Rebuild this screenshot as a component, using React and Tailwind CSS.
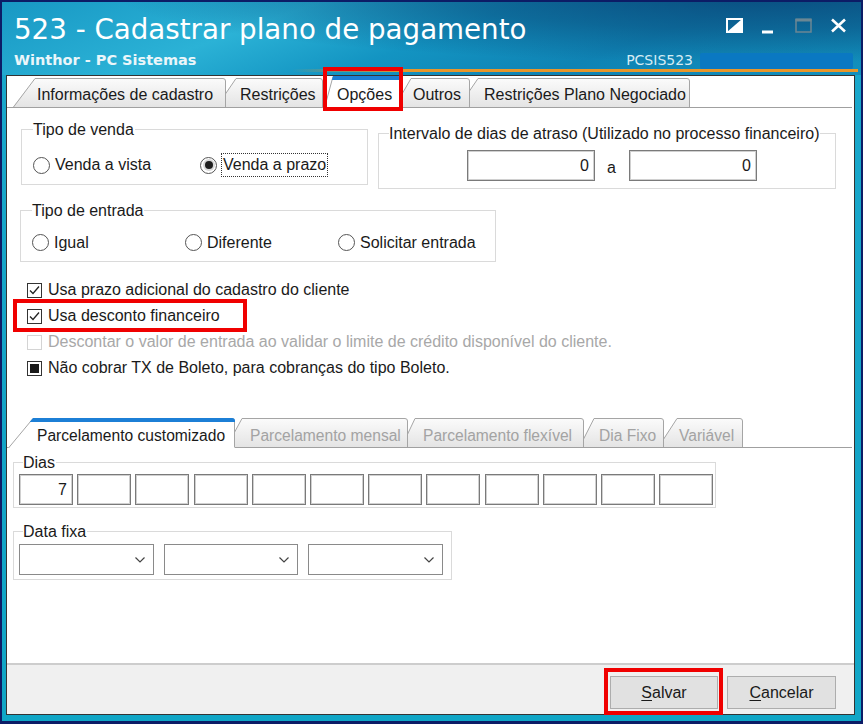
import React from "react";

const Tab = ({ id, label, w, h, s, cls, selected, dim, small }) => {
  const fill = `M0 ${h} L${s} 0.5 L${w - 3} 0.5 Q${w - 0.5} 0.5 ${w - 0.5} 3 L${w - 0.5} ${h} Z`;
  const stroke = `M0.5 ${h} L${s} 0.5 L${w - 3} 0.5 Q${w - 0.5} 0.5 ${w - 0.5} 3 L${w - 0.5} ${selected ? h - 1 : h}`;
  const bar = `M${s} 0 L${w - 3} 0 Q${w} 0 ${w} 3 L${w} 4 L${s - (4 * s) / h} 4 Z`;
  return (
    <div className={`relative shrink-0 flex items-end ${cls}`}>
      <svg className="absolute left-0 top-0" width={w} height={h}>
        <defs>
          <linearGradient id={id} x1="0" y1="0" x2="0" y2="1">
            <stop offset="0" stopColor="#fbfbfb" />
            <stop offset="1" stopColor="#e4e4e4" />
          </linearGradient>
        </defs>
        <path d={fill} fill={selected ? "#ffffff" : `url(#${id})`} />
        <path d={stroke} fill="none" stroke="#a5a5a5" strokeWidth="1" />
        {selected && <path d={bar} fill="#1c7fd6" />}
      </svg>
      <span
        className={`relative whitespace-nowrap ${small ? "text-[15.6px]" : ""} ${dim ? "text-[#a3a3a3]" : "text-[#1a1a1a]"}`}
      >
        {label}
      </span>
    </div>
  );
};

const Group = ({ label, labelCls, cls, children }) => (
  <div className={`relative shrink-0 border border-[#dadada] ${cls}`}>
    <span className={`absolute -top-[9px] ${labelCls} bg-white whitespace-nowrap pr-[1px]`}>{label}</span>
    {children}
  </div>
);

const Radio = ({ checked, label, cls, focus }) => (
  <div className={`flex items-center shrink-0 ${cls}`}>
    <span className="w-[17px] h-[17px] rounded-full border border-[#555] bg-white flex items-center justify-center shrink-0">
      {checked && <span className="w-[8px] h-[8px] rounded-full bg-[#1e1e1e] shadow-[0_0_0_2px_#d8d8d8]" />}
    </span>
    {focus ? (
      <span className="ml-[4px] h-[24px] flex items-center border border-dotted border-[#333] px-[1px] whitespace-nowrap">{label}</span>
    ) : (
      <span className="ml-[5px] whitespace-nowrap">{label}</span>
    )}
  </div>
);

const Check = ({ state, label, disabled }) => (
  <div className="flex items-center h-[26px]">
    <span
      className={`w-[15px] h-[15px] border ${disabled ? "border-[#d4d4d4]" : "border-[#333]"} bg-white flex items-center justify-center shrink-0`}
    >
      {state === "checked" && (
        <svg width="13" height="13" viewBox="0 0 13 13">
          <path d="M2 6.5 L5 9.5 L11 2.5" fill="none" stroke="#222" strokeWidth="1.3" />
        </svg>
      )}
      {state === "ind" && <span className="w-[9px] h-[9px] bg-[#1a1a1a]" />}
    </span>
    <span className={`ml-[6px] whitespace-nowrap ${disabled ? "text-[#a8a8a8]" : ""}`}>{label}</span>
  </div>
);

const Input = ({ cls, value }) => (
  <div
    className={`shrink-0 h-[31px] border border-[#7a7a7a] bg-white shadow-[inset_0_0_0_1px_#d0d0d0] flex items-center justify-end pr-[5px] ${cls}`}
  >
    {value}
  </div>
);

const Select = ({ cls }) => (
  <div className={`shrink-0 h-[31px] border border-[#8a8a8a] bg-white flex items-center justify-end pr-[8px] ${cls}`}>
    <svg width="10" height="6" viewBox="0 0 10 6">
      <path d="M0.5 0.5 L5 5 L9.5 0.5" fill="none" stroke="#444" strokeWidth="1.2" />
    </svg>
  </div>
);

export default function App() {
  const dias = ["7", "", "", "", "", "", "", "", "", "", "", ""];
  return (
    <div className="relative w-[863px] h-[724px] bg-[#0c1c66] pt-[2px] px-[2px] pb-[3px] font-['Liberation_Sans',Arial,sans-serif] text-[16px] leading-[18px] text-[#1a1a1a]">
      <div className="w-full h-full flex flex-col bg-[linear-gradient(180deg,#1ba8cc_0%,#13a3c6_60%,#10a6c6_100%)]">
        {/* Title area */}
        <div className="h-[73px] shrink-0 flex flex-col pt-[12px] bg-[radial-gradient(ellipse_at_88%_-10%,#0a4e80_0%,rgba(10,80,128,0.6)_30%,transparent_60%),linear-gradient(160deg,#1898c4_0%,#2bb2d6_30%,#1394c2_50%,#0f83b4_70%,#1290bd_100%)]">
          <div className="flex items-start h-[32px]">
            <div className="pl-[12px] font-['DejaVu_Sans',sans-serif] text-[27.7px] leading-[32px] text-white whitespace-nowrap">
              523 - Cadastrar plano de pagamento
            </div>
            <div className="ml-auto mr-[14px] mt-[4px] flex items-start">
              <svg width="17" height="15" viewBox="0 0 17 15">
                <rect x="1" y="1" width="15" height="13" fill="none" stroke="#ffffff" strokeWidth="2" />
                <polygon points="16,1 16,14 1,14" fill="#ffffff" />
              </svg>
              <svg className="ml-[19px]" width="11" height="16" viewBox="0 0 11 16">
                <rect x="0" y="12.5" width="11" height="3" fill="#ffffff" />
              </svg>
              <svg className="ml-[22px]" width="17" height="15" viewBox="0 0 17 15">
                <rect x="1" y="1.5" width="15" height="12.5" fill="none" stroke="#6b8794" strokeWidth="1.5" />
                <rect x="0.5" y="0.5" width="16" height="3" fill="#6b8794" />
              </svg>
              <svg className="ml-[18px]" width="17" height="15" viewBox="0 0 17 15">
                <path d="M2 1.5 L15 13.5 M15 1.5 L2 13.5" stroke="#ffffff" strokeWidth="2.6" />
              </svg>
            </div>
          </div>
          <div className="mt-[6px] h-[17px] flex items-end">
            <div className="pl-[12px] self-start font-['DejaVu_Sans',sans-serif] font-bold text-[14.5px] leading-[17px] text-[#eaf6fa] whitespace-nowrap">
              Winthor - PC Sistemas
            </div>
            <div className="ml-auto self-start font-['DejaVu_Sans',sans-serif] text-[14px] leading-[17px] text-[#d6ecf4] whitespace-nowrap">
              PCSIS523
            </div>
            <div className="ml-[7px] mr-[8px] w-[153px] h-[16px] rounded-[2px] bg-[#0a78c2]" />
          </div>
          <div className="ml-[290px] mr-[3px] h-[3px] bg-[linear-gradient(90deg,rgba(232,150,40,0)_0%,#e8962a_20%,#e8962a_100%)]" />
        </div>

        {/* Main panel */}
        <div className="ml-[4px] mr-[6px] mb-[6px] flex-1 border border-[#333] bg-white flex flex-col">
          {/* top tabs */}
          <div className="flex items-end h-[32px] shrink-0 border-b border-[#a0a0a0] mr-[2px]">
            <Tab id="t1" label="Informações de cadastro" w={213} h={29} s={22} cls="w-[213px] h-[29px] ml-[6px] z-[5] pl-[24px] pb-[3px]" />
            <Tab id="t2" label="Restrições" w={107} h={29} s={20} cls="w-[107px] h-[29px] -ml-[10px] z-[4] pl-[24px] pb-[3px]" />
            <Tab id="t3" label="Opções" w={77} h={32} s={9} selected cls="w-[77px] h-[32px] ml-[1px] -mb-[1px] z-[10] pl-[13px] pb-[4px]" />
            <Tab id="t4" label="Outros" w={76} h={29} s={17} cls="w-[76px] h-[29px] -ml-[7px] z-[3] pl-[19px] pb-[3px]" />
            <Tab id="t5" label="Restrições Plano Negociado" w={232} h={29} s={20} cls="w-[232px] h-[29px] -ml-[12px] z-[2] pl-[26px] pb-[3px]" />
          </div>

          {/* tab page */}
          <div className="flex-1 flex flex-col pt-[21px]">
            <div className="flex items-start">
              <Group label="Tipo de venda" labelCls="left-[11px]" cls="ml-[14px] w-[347px] h-[56px]">
                <div className="flex items-center h-[24px] mt-[23px] pl-[11px]">
                  <Radio label="Venda a vista" cls="w-[167px]" />
                  <Radio label="Venda a prazo" checked focus />
                </div>
              </Group>
              <Group
                label="Intervalo de dias de atraso (Utilizado no processo financeiro)"
                labelCls="left-[10px]"
                cls="ml-[10px] mt-[4px] w-[458px] h-[56px]"
              >
                <div className="flex items-start mt-[16px] pl-[88px]">
                  <Input cls="w-[128px]" value="0" />
                  <span className="ml-[12px] mt-[9px]">a</span>
                  <Input cls="ml-[13px] w-[128px]" value="0" />
                </div>
              </Group>
            </div>

            <Group label="Tipo de entrada" labelCls="left-[11px]" cls="mt-[21px] ml-[13px] w-[476px] h-[52px]">
              <div className="flex items-center h-[17px] mt-[23px] pl-[11px]">
                <Radio label="Igual" cls="w-[153px]" />
                <Radio label="Diferente" cls="w-[153px]" />
                <Radio label="Solicitar entrada" />
              </div>
            </Group>

            <div className="mt-[15px] pl-[20px] flex flex-col">
              <Check state="checked" label="Usa prazo adicional do cadastro do cliente" />
              <Check state="checked" label="Usa desconto financeiro" />
              <Check disabled label="Descontar o valor de entrada ao validar o limite de crédito disponível do cliente." />
              <Check state="ind" label="Não cobrar TX de Boleto, para cobranças do tipo Boleto." />
            </div>

            {/* bottom tabs */}
            <div className="mt-[37px] flex items-end h-[30px] shrink-0 border-b border-[#a0a0a0] mr-[2px]">
              <Tab id="b1" label="Parcelamento customizado" w={227} h={30} s={25} selected small cls="w-[227px] h-[30px] ml-[1px] -mb-[1px] z-[10] pl-[29px] pb-[3px]" />
              <Tab id="b2" label="Parcelamento mensal" w={182} h={29} s={16} dim small cls="w-[182px] h-[29px] -ml-[9px] z-[5] pl-[24px] pb-[2px]" />
              <Tab id="b3" label="Parcelamento flexível" w={183} h={29} s={14} dim small cls="w-[183px] h-[29px] -ml-[7px] z-[4] pl-[22px] pb-[2px]" />
              <Tab id="b4" label="Dia Fixo" w={85} h={29} s={15} dim small cls="w-[85px] h-[29px] -ml-[5px] z-[3] pl-[20px] pb-[2px]" />
              <Tab id="b5" label="Variável" w={85} h={29} s={19} dim small cls="w-[85px] h-[29px] -ml-[6px] z-[2] pl-[21px] pb-[2px]" />
            </div>

            <Group label="Dias" labelCls="left-[9px]" cls="mt-[14px] ml-[6px] w-[703px] h-[46px]">
              <div className="flex mt-[11px] pl-[5px] gap-[4.2px]">
                {dias.map((d, i) => (
                  <Input key={i} cls="w-[54px]" value={d} />
                ))}
              </div>
            </Group>

            <Group label="Data fixa" labelCls="left-[9px]" cls="mt-[23px] ml-[6px] w-[439px] h-[49px]">
              <div className="flex mt-[12px] pl-[5px] gap-[10px]">
                <Select cls="w-[135px]" />
                <Select cls="w-[134px]" />
                <Select cls="w-[135px]" />
              </div>
            </Group>
          </div>

          {/* bottom bar */}
          <div className="h-[51px] shrink-0 border-t-2 border-[#cdcdcd] bg-[#f0f0f0] flex items-start justify-end pt-[11px] pr-[18px]">
            <button className="w-[108px] h-[33px] bg-[#e1e1e1] border border-[#adadad] text-[16px] leading-[18px] text-[#1a1a1a]">
              <span className="underline underline-offset-2">S</span>alvar
            </button>
            <button className="ml-[9px] w-[109px] h-[33px] bg-[#e1e1e1] border border-[#adadad] text-[16px] leading-[18px] text-[#1a1a1a]">
              <span className="underline underline-offset-2">C</span>ancelar
            </button>
          </div>
        </div>
      </div>

      {/* red annotation boxes */}
      <div className="absolute left-[323px] top-[67px] w-[80px] h-[44px] border-4 border-[#f00000] z-20" />
      <div className="absolute left-[13px] top-[299px] w-[234px] h-[33px] border-4 border-[#f00000] z-20" />
      <div className="absolute left-[604px] top-[668px] w-[119px] h-[47px] border-4 border-[#f00000] z-20" />
    </div>
  );
}
